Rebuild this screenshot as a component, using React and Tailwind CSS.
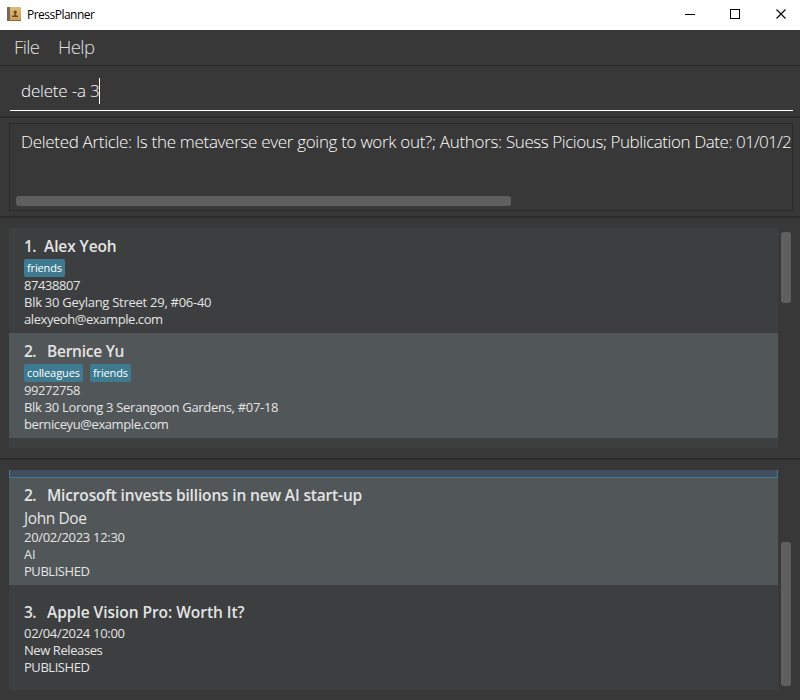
function Row({ children, className = "tracking-[-0.3px]" }) {
  return <div className={`h-[17px] text-[13px] leading-[17px] whitespace-nowrap ${className}`}>{children}</div>;
}

function Title({ n, children, gap = "w-[23px]", className = "" }) {
  return (
    <div className="flex h-[21px] text-[15.5px] leading-[17px] font-semibold whitespace-nowrap">
      <span className={`shrink-0 tracking-[-0.6px] ${gap}`}>{n}.</span>
      <span className={className}>{children}</span>
    </div>
  );
}

function Tag({ children, className }) {
  return (
    <span className={`h-[18px] rounded-[2px] bg-[#3e7b91] pl-[3px] text-[11px] leading-[18px] whitespace-nowrap text-white ${className}`}>
      {children}
    </span>
  );
}

function Separator() {
  return <div className="h-[2px] shrink-0 bg-[#2b2b2b]" />;
}

export default function App() {
  return (
    <div className="flex h-[700px] w-[800px] flex-col overflow-hidden bg-[#383838] font-['Open_Sans','Noto_Sans',sans-serif] text-[#e4e4e4]">
      <header className="flex h-[30px] shrink-0 items-center bg-white pl-[7px] text-black">
        <svg width="14" height="14" viewBox="0 0 14 14" className="mb-[2px] shrink-0">
          <defs>
            <linearGradient id="cover" x1="0" y1="0" x2="0" y2="1">
              <stop offset="0" stopColor="#e0ba78" />
              <stop offset="1" stopColor="#cf9c50" />
            </linearGradient>
          </defs>
          <rect width="14" height="14" rx="1" fill="url(#cover)" />
          <rect width="3" height="14" rx="0.5" fill="#75675c" />
          <path d="M0 13.500h14" stroke="#8a6a3c" />
          <circle cx="8.2" cy="5" r="1.6" fill="#5c4a30" />
          <path d="M7.500 6h1.400v2.200l2.100.6V10H5.200V8.800l2.300-.6z" fill="#5c4a30" />
        </svg>
        <span className="ml-[6px] flex-1 text-[12px] leading-[16px] tracking-[-0.52px]">PressPlanner</span>
        <svg width="115" height="30" viewBox="0 0 115 30" fill="none" stroke="#000" className="shrink-0">
          <path d="M0 14.500h10" />
          <rect x="45.500" y="9.500" width="9" height="9" />
          <path d="M91.500 9.500l9 9m0-9l-9 9" strokeWidth="1.100" />
        </svg>
      </header>

      <nav className="flex h-[36px] shrink-0 gap-[18px] border-b border-[#2b2b2b] pl-[14px] text-[18.500px] leading-[34px] font-light text-[#e0e0e0]">
        <span className="w-[26px] tracking-[-0.6px]">File</span>
        <span className="tracking-[-0.55px]">Help</span>
      </nav>

      <div className="h-[50px] shrink-0 pr-[7px] pl-[10px]">
        <div className="flex h-[45px] items-center border-b border-white pt-[6px] pl-[11px] text-[17px] font-light text-white">
          <span className="tracking-[-0.2px] whitespace-nowrap">delete -a 3</span>
          <span className="h-[26px] w-px bg-white" />
        </div>
      </div>
      <Separator />

      <div className="mx-[9px] mt-[5px] mr-[7px] mb-[5px] flex h-[88px] shrink-0 flex-col justify-between overflow-hidden border border-[#2b2b2b] pr-px pb-[4px] pl-[6px]">
        <div className="overflow-hidden pt-[6px] pl-[5px] text-[17px] leading-[24px] font-light whitespace-nowrap text-white">
          <span className="tracking-[-0.31px]">Deleted Article: Is the metaverse ever going to work out?; Authors: </span>
          <span className="tracking-[-0.43px]">Suess Picious; Publication Date: </span>
          <span className="tracking-[-0.75px]">01/01/2024</span>
        </div>
        <div className="h-[10px] w-[495px] rounded-[3px] bg-[#5f5f5f]" />
      </div>
      <Separator />

      <section className="flex h-[240px] shrink-0 py-[10px] pl-[9px]">
        <div className="flex w-[769px] flex-col overflow-hidden bg-[#3c3e3f]">
          <div className="h-[105px] shrink-0 pt-[10px] pl-[15px]">
            <Title n="1" gap="w-[20px]" className="tracking-[-0.1px]">Alex Yeoh</Title>
            <div className="flex">
              <Tag className="w-[41px] tracking-[-0.15px]">friends</Tag>
            </div>
            <Row className="tracking-[-0.45px]">87438807</Row>
            <Row className="tracking-[-0.27px]">Blk 30 Geylang Street 29, #06-40</Row>
            <Row className="tracking-[-0.43px]">alexyeoh@example.com</Row>
          </div>
          <div className="h-[105px] shrink-0 bg-[#515658] pt-[10px] pl-[15px]">
            <Title n="2" className="tracking-[-0.25px]">Bernice Yu</Title>
            <div className="flex gap-[7px]">
              <Tag className="w-[59px] tracking-[-0.1px]">colleagues</Tag>
              <Tag className="w-[41px] tracking-[-0.15px]">friends</Tag>
            </div>
            <Row className="tracking-[-0.45px]">99272758</Row>
            <Row>Blk 30 Lorong 3 Serangoon Gardens, #07-18</Row>
            <Row className="tracking-[-0.4px]">berniceyu@example.com</Row>
          </div>
        </div>
        <div className="mt-[4px] ml-[3px] h-[71px] w-[10px] rounded-[3px] bg-[#5f5f5f]" />
      </section>
      <Separator />

      <section className="flex h-[240px] shrink-0 py-[10px] pl-[9px]">
        <div className="flex w-[769px] flex-col overflow-hidden bg-[#3c3e3f]">
          <div className="h-[8px] shrink-0 border-x border-b border-[#3e7b91] bg-[#424d5f]" />
          <div className="h-[107px] shrink-0 bg-[#515658] pt-[9px] pl-[15px]">
            <Title n="2" className="tracking-[-0.16px]">Microsoft invests billions in new AI start-up</Title>
            <div className="h-[21px] pt-[2px] text-[15.500px] leading-[17px] font-[450] tracking-[-0.4px]">John Doe</div>
            <Row>20/02/2023 12:30</Row>
            <Row>AI</Row>
            <Row className="tracking-[-0.45px]">PUBLISHED</Row>
          </div>
          <div className="flex-1 pt-[19px] pl-[15px]">
            <Title n="3" className="tracking-[-0.04px]">Apple Vision Pro: Worth It?</Title>
            <Row>02/04/2024 10:00</Row>
            <Row className="tracking-[-0.42px]">New Releases</Row>
            <Row className="tracking-[-0.45px]">PUBLISHED</Row>
          </div>
        </div>
        <div className="mt-[72px] ml-[3px] h-[144px] w-[10px] rounded-[3px] bg-[#5f5f5f]" />
      </section>
    </div>
  );
}
